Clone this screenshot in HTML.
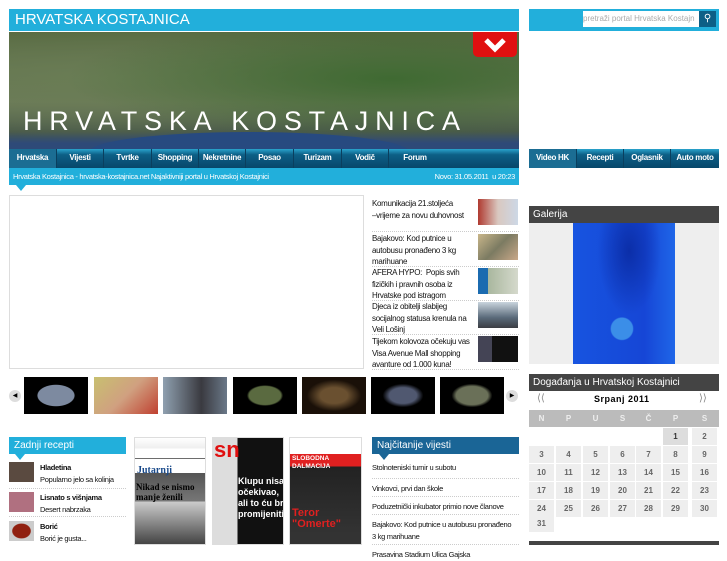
<!DOCTYPE html>
<html><head><meta charset="utf-8"><style>
*{margin:0;padding:0;box-sizing:border-box}
body{width:727px;height:545px;overflow:hidden;background:#fff;font-family:"Liberation Sans",sans-serif;position:relative}
.a{position:absolute}
.nav{background:linear-gradient(#2aa3cc 0,#0d5f86 30%,#07476a 100%);color:#fff;font-size:8px;font-weight:bold;display:flex;letter-spacing:-0.3px}
.nav div{text-align:center;line-height:18px;border-right:1px solid #0a3f5e}
.news{font-size:8px;line-height:11.5px;color:#111;letter-spacing:-0.3px}
.thumb{background:#000;top:377px;height:37px;width:64px}
.cal div{position:absolute;background:#eee;font-size:8px;color:#666;text-align:center;line-height:17px;font-weight:bold;width:25px;height:17px}
.sep{border-bottom:1px dotted #ccc}
.it{position:absolute;left:0;width:147px;height:34px;border-bottom:1px dotted #ccc}
.it span{position:absolute;left:0;top:0;width:104px}
.it i{position:absolute;left:106px;width:40px;height:26px}
</style></head><body>
<div class="a" style="left:9px;top:9px;width:510px;height:22px;background:#22afdb;color:#fff;font-size:15px;line-height:22px;padding-left:6px">HRVATSKA KOSTAJNICA</div>
<div class="a" style="left:529px;top:9px;width:190px;height:22px;background:#22afdb"></div>
<div class="a" style="left:583px;top:11px;width:133px;height:16px;background:#fff;font-size:8px;color:#aaa;line-height:16px;overflow:hidden;white-space:nowrap">pretraži portal Hrvatska Kostajn</div>
<div class="a" style="left:699px;top:11px;width:17px;height:16px;background:#0d5f86;color:#fff;font-size:10px;text-align:center;line-height:16px">⚲</div>
<div class="a" style="left:9px;top:32px;width:510px;height:117px;background:radial-gradient(ellipse at 75% 40%,#3f6a32,transparent 60%),radial-gradient(ellipse at 20% 40%,#6a7d55,transparent 60%),linear-gradient(#55683f,#6d7a5a 60%,#4a5a4a 85%,#2e4a78 95%);overflow:hidden">
<div class="a" style="left:80px;top:100px;width:320px;height:40px;border-radius:50%;background:#274a80"></div>
<div class="a" style="left:14px;top:74px;color:#fff;font-size:27px;line-height:30px;letter-spacing:6.8px;white-space:nowrap">HRVATSKA KOSTAJNICA</div>
<div class="a" style="left:464px;top:0;width:44px;height:25px;background:#e01010;border-radius:0 0 5px 5px"><svg width="44" height="25"><path d="M13 8 L22 17 L31 8" stroke="#fff" stroke-width="5" fill="none"/></svg></div>
</div>
<div class="a nav" style="left:9px;top:149px;width:510px;height:19px">
<div style="width:48px;background:#1b6d93">Hrvatska</div><div style="width:47px">Vijesti</div><div style="width:48px">Tvrtke</div><div style="width:47px">Shopping</div><div style="width:47px">Nekretnine</div><div style="width:48px">Posao</div><div style="width:48px">Turizam</div><div style="width:47px">Vodič</div><div style="width:52px;border:0">Forum</div></div>
<div class="a nav" style="left:529px;top:149px;width:190px;height:19px">
<div style="width:48px;background:#1b6d93">Video HK</div><div style="width:47px">Recepti</div><div style="width:47px">Oglasnik</div><div style="width:48px;border:0">Auto moto</div></div>
<div class="a" style="left:9px;top:168px;width:510px;height:17px;background:#22afdb;color:#fff;font-size:7.5px;line-height:17px;padding:0 4px;letter-spacing:-0.3px">Hrvatska Kostajnica - hrvatska-kostajnica.net Najaktivniji portal u Hrvatskoj Kostajnici<span style="float:right">Novo: 31.05.2011 &nbsp;u 20:23</span></div>
<div class="a" style="left:16px;top:185px;border-left:5px solid transparent;border-right:5px solid transparent;border-top:6px solid #22afdb"></div>
<div class="a" style="left:9px;top:195px;width:355px;height:174px;border:1px solid #ddd"></div>
<div class="a news" style="left:372px;top:198px;width:147px;height:172px">
<div class="it" style="top:0"><span>Komunikacija 21.stoljeća<br>–vrijeme za novu duhovnost</span><i style="top:1px;background:linear-gradient(90deg,#b03a30,#d9c8c0 50%,#cdd8e6)"></i></div>
<div class="it" style="top:35px"><span>Bajakovo: Kod putnice u<br>autobusu pronađeno 3 kg<br>marihuane</span><i style="top:1px;background:linear-gradient(135deg,#c9b68a,#7c7b62 50%,#c9a889)"></i></div>
<div class="it" style="top:69px"><span>AFERA HYPO:&nbsp; Popis svih<br>fizičkih i pravnih osoba iz<br>Hrvatske pod istragom</span><i style="top:1px;background:linear-gradient(90deg,#1b6bb0 25%,#a9b79e 25%,#d5d9cc)"></i></div>
<div class="it" style="top:103px"><span>Djeca iz obitelji slabijeg<br>socijalnog statusa krenula na<br>Veli Lošinj</span><i style="top:1px;background:linear-gradient(#c9d4dd,#5a6a7a 60%,#3b3e44)"></i></div>
<div class="it" style="top:138px"><span>Tijekom kolovoza očekuju vas<br>Visa Avenue Mall shopping<br>avanture od 1.000 kuna!</span><i style="top:0;background:linear-gradient(90deg,#445 35%,#111 35%)"></i></div>
</div>
<div class="a" style="left:529px;top:206px;width:190px;height:17px;background:#444;color:#fff;font-size:10px;line-height:17px;padding-left:4px">Galerija</div>
<div class="a" style="left:529px;top:223px;width:190px;height:141px;background:#eee"></div>
<div class="a" style="left:573px;top:223px;width:102px;height:141px;background:radial-gradient(circle at 48% 75%,#3b8ee8 9%,transparent 10%),radial-gradient(ellipse at 55% 20%,#0b2ea8,transparent 40%),linear-gradient(90deg,#1754e0,#1646d6 70%,#1f66e8)"></div>
<div class="a" style="left:9px;top:390px;width:12px;height:12px;border-radius:50%;background:#ddd;font-size:6px;line-height:12px;text-align:center">◀</div>
<div class="a" style="left:506px;top:390px;width:12px;height:12px;border-radius:50%;background:#ddd;font-size:6px;line-height:12px;text-align:center">▶</div>
<div class="a thumb" style="left:24px;background:radial-gradient(#7d8aa0 40%,#000 42%)"></div>
<div class="a thumb" style="left:94px;background:linear-gradient(135deg,#c8c070,#d0a080 50%,#c04030)"></div>
<div class="a thumb" style="left:163px;background:linear-gradient(90deg,#8fa0b0,#3a3a40 60%,#6a7888)"></div>
<div class="a thumb" style="left:233px;background:radial-gradient(#5a6a40 35%,#000 40%)"></div>
<div class="a thumb" style="left:302px;background:radial-gradient(#6a5030 30%,#1a1008 60%)"></div>
<div class="a thumb" style="left:371px;background:radial-gradient(#505870 30%,#000 45%)"></div>
<div class="a thumb" style="left:440px;background:radial-gradient(#6a7058 35%,#000 45%)"></div>
<div class="a" style="left:529px;top:374px;width:190px;height:17px;background:#444;color:#fff;font-size:10px;line-height:17px;padding-left:4px">Događanja u Hrvatskoj Kostajnici</div>
<div class="a" style="left:537px;top:393px;font-size:10px;color:#888">⟨⟨</div>
<div class="a" style="left:594px;top:394px;font-size:9px;font-weight:bold;letter-spacing:0.5px">Srpanj 2011</div>
<div class="a" style="left:699px;top:393px;font-size:10px;color:#888">⟩⟩</div>
<div class="a" style="left:529px;top:410px;width:190px;height:17px;background:#bbb"></div>
<div class="cal">
<div style="left:529px;top:410px;background:none;color:#eee">N</div><div style="left:556px;top:410px;background:none;color:#eee">P</div><div style="left:583px;top:410px;background:none;color:#eee">U</div><div style="left:610px;top:410px;background:none;color:#eee">S</div><div style="left:636px;top:410px;background:none;color:#eee">Č</div><div style="left:663px;top:410px;background:none;color:#eee">P</div><div style="left:692px;top:410px;background:none;color:#eee">S</div>
<div style="left:663px;top:428px;background:#ddd;color:#333">1</div><div style="left:692px;top:428px">2</div>
<div style="left:529px;top:446px">3</div><div style="left:556px;top:446px">4</div><div style="left:583px;top:446px">5</div><div style="left:610px;top:446px">6</div><div style="left:636px;top:446px">7</div><div style="left:663px;top:446px">8</div><div style="left:692px;top:446px">9</div>
<div style="left:529px;top:464px">10</div><div style="left:556px;top:464px">11</div><div style="left:583px;top:464px">12</div><div style="left:610px;top:464px">13</div><div style="left:636px;top:464px">14</div><div style="left:663px;top:464px">15</div><div style="left:692px;top:464px">16</div>
<div style="left:529px;top:482px">17</div><div style="left:556px;top:482px">18</div><div style="left:583px;top:482px">19</div><div style="left:610px;top:482px">20</div><div style="left:636px;top:482px">21</div><div style="left:663px;top:482px">22</div><div style="left:692px;top:482px">23</div>
<div style="left:529px;top:500px">24</div><div style="left:556px;top:500px">25</div><div style="left:583px;top:500px">26</div><div style="left:610px;top:500px">27</div><div style="left:636px;top:500px">28</div><div style="left:663px;top:500px">29</div><div style="left:692px;top:500px">30</div>
<div style="left:529px;top:515px">31</div>
</div>
<div class="a" style="left:529px;top:541px;width:190px;height:4px;background:#444"></div>
<div class="a" style="left:9px;top:437px;width:117px;height:17px;background:#22afdb;color:#fff;font-size:10px;line-height:17px;padding-left:5px">Zadnji recepti</div>
<div class="a" style="left:15px;top:454px;border-left:5px solid transparent;border-right:5px solid transparent;border-top:6px solid #22afdb"></div>
<div class="a news" style="left:9px;top:462px;width:117px;font-size:7.5px">
<div class="sep" style="height:27px;position:relative;padding-left:31px"><b>Hladetina</b><br>Popularno jelo sa kolinja<div class="a" style="left:0;top:0;width:25px;height:20px;background:#5a4a40"></div></div>
<div class="sep" style="height:28px;position:relative;padding-left:31px;padding-top:3px"><b>Lisnato s višnjama</b><br>Desert nabrzaka<div class="a" style="left:0;top:3px;width:25px;height:20px;background:#b07080"></div></div>
<div style="height:28px;position:relative;padding-left:31px;padding-top:4px"><b>Borić</b><br>Borić je gusta...<div class="a" style="left:0;top:4px;width:25px;height:20px;background:radial-gradient(#902010 50%,#ccc 55%)"></div></div>
</div>
<div class="a" style="left:134px;top:437px;width:72px;height:108px;background:linear-gradient(#fff 0,#eee 10%,#fff 10%,#fff 19%,#222 19%,#fff 20%,#fff 33%,#555 33%,#777 60%,#ccc 60%,#444 100%);border:1px solid #ddd"></div>
<div class="a" style="left:137px;top:465px;font-family:'Liberation Serif',serif;font-size:10px;font-weight:bold;color:#1a4a8a">Jutarnji</div>
<div class="a" style="left:136px;top:482px;font-family:'Liberation Serif',serif;font-size:9px;font-weight:bold;line-height:10px">Nikad se nismo<br>manje ženili</div>
<div class="a" style="left:212px;top:437px;width:72px;height:108px;background:linear-gradient(90deg,#ddd 0,#ddd 35%,#111 35%);border:1px solid #ddd;overflow:hidden"><div class="a" style="left:25px;top:38px;color:#fff;font-size:9px;font-weight:bold;line-height:11px;white-space:nowrap">Klupu nisam<br>očekivao,<br>ali to ću brzo<br>promijeniti</div></div>
<div class="a" style="left:214px;top:438px;color:#e01010;font-size:22px;font-weight:bold;line-height:24px">sn</div>
<div class="a" style="left:289px;top:437px;width:73px;height:108px;background:linear-gradient(#fff 0,#fff 15%,#e02020 15%,#e02020 27%,#222 27%,#333 90%);border:1px solid #ddd"></div>
<div class="a" style="left:292px;top:455px;color:#fff;font-size:6.5px;font-weight:bold;line-height:8px">SLOBODNA<br>DALMACIJA</div>
<div class="a" style="left:292px;top:508px;color:#e02020;font-size:11px;font-weight:bold;line-height:11px">Teror<br>"Omerte"</div>
<div class="a" style="left:372px;top:437px;width:147px;height:17px;background:#1a6596;color:#fff;font-size:10px;line-height:17px;padding-left:5px">Najčitanije vijesti</div>
<div class="a" style="left:379px;top:454px;border-left:5px solid transparent;border-right:5px solid transparent;border-top:6px solid #1a6596"></div>
<div class="a news" style="left:372px;top:461px;width:147px;font-size:7.5px;line-height:12px">
<div class="sep" style="height:18px;padding-top:1px">Stolnoteniski turnir u subotu</div>
<div class="sep" style="height:18px;padding-top:4px">Vinkovci, prvi dan škole</div>
<div class="sep" style="height:18px;padding-top:4px">Poduzetnički inkubator primio nove članove</div>
<div class="sep" style="height:30px;padding-top:4px">Bajakovo: Kod putnice u autobusu pronađeno<br>3 kg marihuane</div>
<div style="padding-top:4px">Prasavina Stadium Ulica Gajska</div>
</div>
</body></html>
